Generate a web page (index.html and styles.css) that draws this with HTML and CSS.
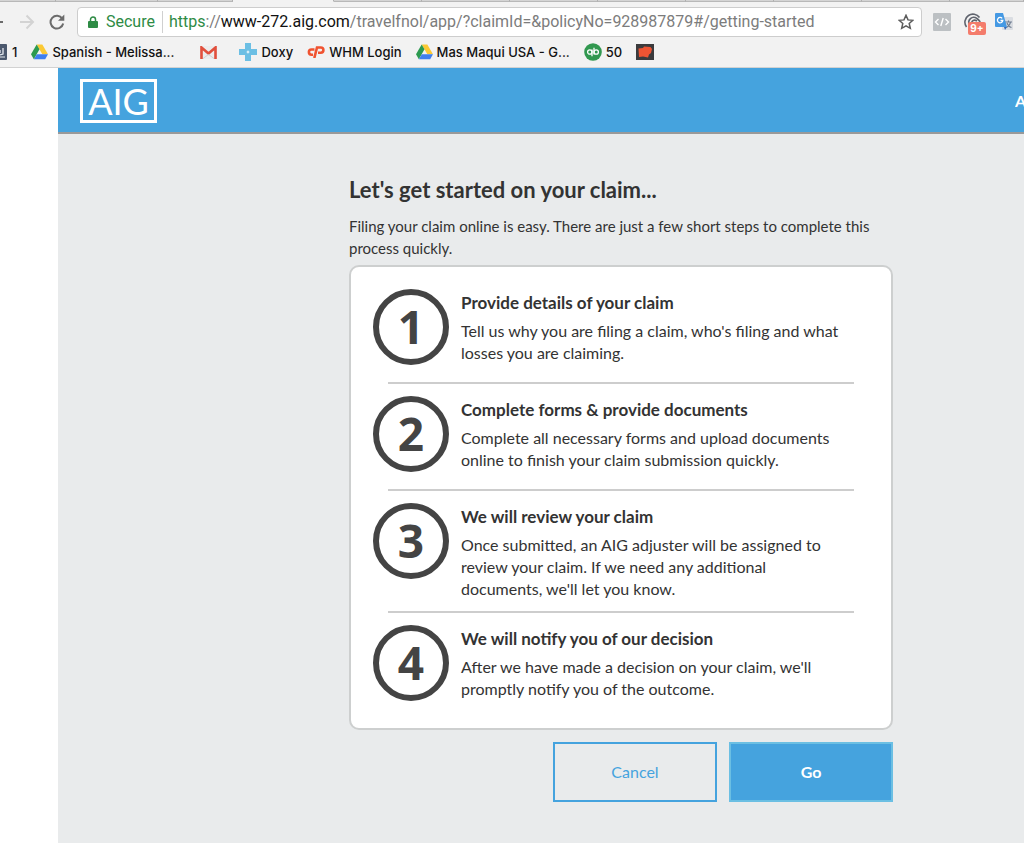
FILE: index.html
```
<!DOCTYPE html>
<html lang="en">
<head>
    <meta charset="UTF-8">
    <meta name="viewport" content="width=device-width, initial-scale=1.0">
    <title>AIG - Getting Started</title>
    <link rel="stylesheet" href="styles.css">
</head>
<body>
    <svg width="0" height="0" class="sprite" aria-hidden="true">
        <symbol id="icon-drive" viewBox="0 0 18 16">
            <path d="M6 0h6l6 10.500h-6z" fill="#fbc934"/>
            <path d="M6 0l3 5.200L3 15.800 0 10.500z" fill="#2c9a50"/>
            <path d="M6.200 10.500H18l-3 5.300H3z" fill="#3f7fee"/>
        </symbol>
    </svg>

    <div class="browser">
        <div class="tab-strip">
            <span class="tab tab-cut"></span>
            <span class="tab"></span>
            <span class="tab tab-side"></span>
            <span class="tab tab-active"></span>
            <span class="tab"></span>
            <span class="tab"></span>
            <span class="tab"></span>
            <span class="tab"></span>
            <span class="tab"></span>
            <span class="tab"></span>
            <span class="tab"></span>
            <span class="tab tab-last"></span>
        </div>

        <div class="toolbar">
            <button type="button" class="tool back" aria-label="Back">
                <svg width="3" height="16" viewBox="0 0 3 16"><path d="M0 8h3" stroke="#6b6b6b" stroke-width="2"/></svg>
            </button>
            <button type="button" class="tool forward" aria-label="Forward">
                <svg width="16" height="16" viewBox="0 0 16 16" fill="none" stroke="#d3d3d3" stroke-width="2"><path d="M1 8h13M7.500 1.500L14 8l-6.500 6.500"/></svg>
            </button>
            <button type="button" class="tool reload" aria-label="Reload">
                <svg width="16" height="16" viewBox="0 0 16 16"><path d="M13.300 4.600A6.400 6.400 0 1 0 14.200 9.600" fill="none" stroke="#6b6b6b" stroke-width="2"/><path d="M15.300.500v6.200H9z" fill="#6b6b6b"/></svg>
            </button>

            <div class="address-bar">
                <svg width="10" height="13" viewBox="0 0 10 13"><path d="M2.500 6V3.500a2.500 2.500 0 0 1 5 0V6" fill="none" stroke="#2e8b45" stroke-width="1.500"/><rect y="5" width="10" height="7" rx="1" fill="#2e8b45"/></svg>
                <span class="secure">Secure</span>
                <div class="url" role="textbox" aria-label="Address" contenteditable="true" spellcheck="false"><span class="scheme">https</span>://<span class="host">www-272.aig.com</span>/travelfnol/app/?claimId=&amp;policyNo=928987879#/getting-started</div>
                <button type="button" class="tool" aria-label="Bookmark this page">
                    <svg width="16" height="16" viewBox="0 0 16 16"><path d="M8 1.300l2 4.600 4.900.400-3.700 3.200 1.100 4.800L8 11.800l-4.300 2.500 1.100-4.800L1.100 6.300 6 5.900z" fill="none" stroke="#5c5c5c" stroke-width="1.500"/></svg>
                </button>
            </div>

            <div class="extensions">
                <button type="button" class="tool" aria-label="Source viewer">
                    <svg width="18" height="18" viewBox="0 0 18 18"><rect width="18" height="18" rx="1" fill="#bcc0c3"/><path d="M5.500 6L2.500 9l3 3M12.500 6l3 3-3 3M10.200 5l-2.400 8" fill="none" stroke="#fff" stroke-width="1.400"/></svg>
                </button>
                <button type="button" class="tool notifier" aria-label="Notifications">
                    <svg width="18" height="18" viewBox="0 0 18 18" fill="none" stroke="#60646e" stroke-width="1.600"><path d="M2.500 14A8 8 0 0 1 4.500 2.500C8 0 13 1 15.500 4.500"/><path d="M5.500 12C3 7 8 2 13 5.500c3 2 3.500 4 3.500 6"/><path d="M8 11c-1-3 2-5 5-3"/></svg>
                    <span class="badge">9+</span>
                </button>
                <button type="button" class="tool" aria-label="Translate">
                    <svg width="18" height="18" viewBox="0 0 18 18"><rect x="7" y="4" width="11" height="13" rx="1" fill="#dadde2"/><path d="M10 9h7M13.500 7.500V9M15.500 9c-.500 3-2 4.500-4 5.500M12 10c.800 2 2.500 4 4.500 4.500" fill="none" stroke="#6f7d90" stroke-width="1.100"/><path d="M1 0h7l4 14H1a1 1 0 0 1-1-1V1a1 1 0 0 1 1-1z" fill="#4599e3"/><path d="M9 14h3l-2 3z" fill="#3568b5"/><path d="M7.200 5.400A2.700 2.700 0 1 0 7.800 7.500H5.500" fill="none" stroke="#fff" stroke-width="1.300"/></svg>
                </button>
            </div>
        </div>

        <nav class="bookmarks" aria-label="Bookmarks">
            <a href="#" class="bookmark bookmark-cut">
                <svg width="7" height="18" viewBox="0 0 7 18"><path d="M0 1h6a1 1 0 0 1 1 1v14a1 1 0 0 1-1 1H0z" fill="#4b586d"/><path d="M0 12l3-1V5M0 7v3" fill="none" stroke="#e6eaf0" stroke-width="1.300"/><path d="M0 14h5" stroke="#e6eaf0"/></svg>
                1
            </a>
            <a href="#" class="bookmark"><svg width="17" height="16"><use href="#icon-drive"/></svg>Spanish - Melissa...</a>
            <a href="#" class="bookmark bookmark-icon" aria-label="Gmail">
                <svg width="17" height="13" viewBox="0 0 17 13"><rect width="17" height="13" rx="1" fill="#ececec"/><path d="M1.500 13V1.500l7 6 7-6V13" fill="none" stroke="#e14f3c" stroke-width="2.600"/><path d="M3 12.500l5.500-4 5.500 4" fill="none" stroke="#cfcfcf"/></svg>
            </a>
            <a href="#" class="bookmark"><svg width="18" height="18" viewBox="0 0 18 18"><path d="M6 0h6v6h6v6h-6v6H6v-6H0V6h6z" fill="#6cbfe4"/><path d="M9 7l.600 1.400L11 9l-1.400.600L9 11l-.600-1.400L7 9l1.400-.600z" fill="#fff"/></svg>Doxy</a>
            <a href="#" class="bookmark"><svg width="18" height="12" viewBox="0 0 18 12" fill="none" stroke="#f05330" stroke-width="2.600"><path d="M7.500 3.500H4.500a2.600 2.600 0 0 0 0 5.200H6"/><path d="M7.300 12L10 1.500h3.800a2.500 2.500 0 0 1 0 5.200H11"/></svg>WHM Login</a>
            <a href="#" class="bookmark"><svg width="17" height="16"><use href="#icon-drive"/></svg>Mas Maqui USA - G...</a>
            <a href="#" class="bookmark"><svg width="18" height="18" viewBox="0 0 18 18"><circle cx="9" cy="9" r="8.800" fill="#31984f"/><g fill="none" stroke="#fff" stroke-width="1.300"><circle cx="5.800" cy="9" r="2.200"/><path d="M8 6.400v6.800"/><circle cx="12.200" cy="9" r="2.200"/><path d="M10 11.600V4.800"/></g></svg>50</a>
            <a href="#" class="bookmark" aria-label="Shop">
                <svg width="18" height="16" viewBox="0 0 18 16"><rect width="18" height="16" fill="#3b3b3d"/><path d="M2.500 4.500L7 4l1-1.500 6.500.500 1.500 2-1 4-2 1.500-1 3-5-1-4 .500z" fill="#ee5433"/></svg>
            </a>
        </nav>
    </div>

    <div class="page">
        <header class="site-header">
            <a href="#" class="logo">AIG</a>
            <a href="#" class="header-link">A</a>
        </header>

        <main class="content">
            <div class="claim">
                <h1>Let's get started on your claim...</h1>
                <p class="intro">Filing your claim online is easy. There are just a few short steps to complete this process quickly.</p>

                <ol class="steps">
                    <li class="step">
                        <span class="step-number">1</span>
                        <div class="step-text">
                            <h2>Provide details of your claim</h2>
                            <p>Tell us why you are filing a claim, who's filing and what losses you are claiming.</p>
                        </div>
                    </li>
                    <li class="step">
                        <span class="step-number">2</span>
                        <div class="step-text">
                            <h2>Complete forms &amp; provide documents</h2>
                            <p>Complete all necessary forms and upload documents online to finish your claim submission quickly.</p>
                        </div>
                    </li>
                    <li class="step">
                        <span class="step-number">3</span>
                        <div class="step-text">
                            <h2>We will review your claim</h2>
                            <p>Once submitted, an AIG adjuster will be assigned to review your claim. If we need any additional documents, we'll let you know.</p>
                        </div>
                    </li>
                    <li class="step">
                        <span class="step-number">4</span>
                        <div class="step-text">
                            <h2>We will notify you of our decision</h2>
                            <p>After we have made a decision on your claim, we'll promptly notify you of the outcome.</p>
                        </div>
                    </li>
                </ol>

                <div class="actions">
                    <button type="button" class="btn btn-outline">Cancel</button>
                    <button type="button" class="btn btn-primary">Go</button>
                </div>
            </div>
        </main>
    </div>
</body>
</html>
```
FILE: styles.css
```
/* Reset & Base Styles */
* {
    margin: 0;
    padding: 0;
    box-sizing: border-box;
}

body {
    min-height: 100vh;
    display: flex;
    flex-direction: column;
    background: #fff;
    color: #333;
    font-family: Futura, Lato, sans-serif;
    font-size: 16px;
    line-height: 22px;
    overflow-x: hidden;
}

a {
    color: inherit;
    text-decoration: none;
}

button {
    font: inherit;
    cursor: pointer;
}

svg {
    display: block;
    flex: none;
}

.sprite {
    position: absolute;
}

/* Browser Chrome */
.browser {
    background: #f2f2f2;
    border-bottom: 1px solid #d2d2d2;
    color: #111;
    font-family: Inter, sans-serif;
}

.tab-strip {
    display: flex;
    height: 2px;
    overflow: hidden;
}

.tab {
    flex: none;
    width: 88px;
    background: #d4d4d4;
    border-right: 1px solid #b0b0b0;
    border-bottom: 1px solid #b8b8b8;
}

.tab-cut {
    width: 56px;
}

.tab:nth-child(2) {
    width: 102px;
}

.tab-side {
    width: 75px;
}

.tab-active {
    width: 101px;
    background: #f2f2f2;
    border-bottom-color: #f2f2f2;
}

.tab-last {
    flex: 1;
}

.toolbar {
    display: flex;
    align-items: center;
    height: 40px;
    padding-right: 11px;
}

.tool {
    flex: none;
    background: none;
    border: none;
}

.forward {
    margin-left: 16px;
}

.reload {
    margin: 0 12px 0 14px;
}

.address-bar {
    flex: 1;
    min-width: 0;
    display: flex;
    align-items: center;
    height: 30px;
    padding: 0 7px 0 10px;
    background: #fff;
    border: 1px solid #cdcdcd;
    border-radius: 4px;
    font-family: Roboto, sans-serif;
    font-size: 16px;
}

.secure {
    margin-left: 8px;
    padding-right: 7px;
    border-right: 1px solid #d0d0d0;
    color: #2e8b45;
}

.url {
    flex: 1;
    min-width: 0;
    padding-left: 6px;
    color: #7c7c7c;
    white-space: nowrap;
    overflow: hidden;
    outline: none;
}

.scheme {
    color: #2e8b45;
}

.host {
    color: #111;
}

.extensions {
    display: flex;
    gap: 13px;
    margin-left: 11px;
}

.notifier {
    position: relative;
}

.badge {
    position: absolute;
    top: 9px;
    left: 4px;
    width: 18px;
    height: 13px;
    background: #f47c6c;
    border-radius: 2px;
    color: #fff;
    font-size: 10px;
    font-weight: 700;
    line-height: 13px;
    text-align: center;
}

.bookmarks {
    display: flex;
    align-items: center;
    gap: 14px;
    height: 25px;
    padding-bottom: 5px;
    font-size: 13px;
    font-weight: 500;
    white-space: nowrap;
}

.bookmark {
    display: flex;
    align-items: center;
    gap: 4px;
}

.bookmark-cut {
    gap: 5px;
}

.bookmark-icon {
    margin: 0 8px 0 12px;
}

/* Page Layout */
.page {
    flex: 1;
    display: flex;
    flex-direction: column;
    margin-left: 58px;
    background: #e9ebec;
}

.site-header {
    display: flex;
    align-items: center;
    justify-content: space-between;
    height: 66px;
    padding-top: 2px;
    padding-left: 22px;
    background: #45a3de;
    border-bottom: 2px solid #999;
    color: #fff;
}

.logo {
    width: 77px;
    height: 44px;
    border: 3px solid #fff;
    font-size: 36px;
    line-height: 38px;
    text-align: center;
}

.header-link {
    width: 9px;
    font-weight: 700;
    overflow: hidden;
}

.content {
    padding: 41px 24px 41px 291px;
}

.claim {
    max-width: 544px;
}

h1 {
    margin-bottom: 10px;
    font-size: 22px;
    font-weight: 700;
    line-height: 30px;
}

.intro {
    font-size: 15px;
}

/* Steps Card */
.steps {
    margin-top: 6px;
    padding: 22px 37px 21px 22px;
    background: #fff;
    border: 2px solid #cdcfcf;
    border-radius: 10px;
    list-style: none;
}

.step {
    display: grid;
    grid-template-columns: 76px 1fr;
    column-gap: 12px;
}

.step:not(:last-child)::after {
    content: "";
    grid-column: 1 / -1;
    height: 2px;
    margin: 11px 0 12px 15px;
    background: #cdcdcd;
}

.step-number {
    display: flex;
    align-items: center;
    justify-content: center;
    width: 76px;
    height: 76px;
    padding-bottom: 2px;
    border: 6px solid #444;
    border-radius: 50%;
    color: #444;
    font-family: "Open Sans", sans-serif;
    font-size: 46px;
    font-weight: 700;
}

.step-text {
    min-height: 82px;
    padding-right: 8px;
}

.step h2 {
    margin-bottom: 3px;
    font-size: 17px;
    font-weight: 700;
    line-height: 28px;
}

/* Buttons */
.actions {
    display: flex;
    justify-content: flex-end;
    gap: 12px;
    margin-top: 12px;
}

.btn {
    width: 164px;
    height: 60px;
    border: 2px solid #45a3de;
}

.btn-outline {
    background: transparent;
    color: #45a3de;
}

.btn-primary {
    background: #45a3de;
    border-color: #6bbfe3;
    color: #fff;
    font-weight: 700;
}
```
